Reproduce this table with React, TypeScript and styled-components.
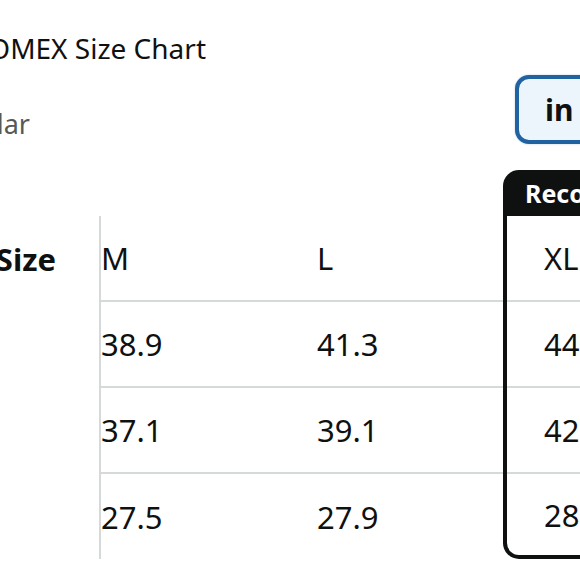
import React from "react";
import styled, { createGlobalStyle } from "styled-components";

const Global = createGlobalStyle`
  html, body { margin: 0; padding: 0; background: #ffffff; }
  body { font-family: "Noto Sans", "Open Sans", sans-serif; color: #0f1111; overflow: hidden; }
`;

const Page = styled.div`
  width: 580px;
  height: 580px;
  overflow: hidden;
  background: #ffffff;
  display: flex;
  flex-direction: column;
`;

const ClipRight = styled.div<{ $w: number }>`
  width: ${(p) => p.$w}px;
  display: flex;
  justify-content: flex-end;
  overflow: hidden;
  white-space: nowrap;
  flex-shrink: 0;
`;

const Title = styled.h1`
  margin: 0;
  font-size: 28px;
  font-weight: 400;
  line-height: 40px;
  color: #0f1111;
`;

const TitleRow = styled.div`
  margin-top: 28px;
  height: 40px;
  display: flex;
`;

const SubRow = styled.div`
  display: flex;
  justify-content: space-between;
  align-items: flex-start;
  margin-top: 7px;
`;

const Subtitle = styled.span`
  font-size: 27px;
  line-height: 36px;
  color: #565959;
  margin-top: 31px;
`;

const UnitToggle = styled.div`
  width: 120px;
  height: 69px;
  box-sizing: border-box;
  margin-right: -55px;
  border: 4px solid #2162a1;
  border-radius: 14px;
  background: #edf5fc;
  box-shadow: 0 0 2px rgba(33, 98, 161, 0.35);
  display: flex;
  align-items: center;
  padding-left: 26px;
  font-size: 30px;
  font-weight: 700;
  color: #0f1111;
`;

const Table = styled.div`
  margin-top: 26px;
  display: flex;
  align-items: flex-end;
`;

const LabelCol = styled.div`
  width: 99px;
  flex-shrink: 0;
  display: flex;
  flex-direction: column;
`;

const Col = styled.div<{ $w: number }>`
  width: ${(p) => p.$w}px;
  flex-shrink: 0;
  display: flex;
  flex-direction: column;
`;

const FirstCol = styled(Col)`
  border-left: 2px solid #d5d9d9;
`;

const Cell = styled.div<{ $h: number; $last?: boolean; $pad?: number }>`
  height: ${(p) => p.$h}px;
  box-sizing: border-box;
  display: flex;
  align-items: center;
  padding-left: ${(p) => p.$pad ?? 0}px;
  font-size: 31px;
  color: #0f1111;
  white-space: nowrap;
  border-bottom: ${(p) => (p.$last ? "none" : "2px solid #d5d9d9")};
`;

const LabelCell = styled(Cell)`
  border-bottom: none;
  font-weight: 700;
`;

const RecCol = styled.div`
  width: 200px;
  flex-shrink: 0;
  display: flex;
  flex-direction: column;
`;

const RecTab = styled.div`
  height: 46px;
  background: #0f1111;
  border-radius: 16px 16px 0 0;
  display: flex;
  align-items: center;
  padding-left: 22px;
  color: #ffffff;
  font-size: 25px;
  font-weight: 700;
  white-space: nowrap;
`;

const RecBody = styled.div`
  border: 4px solid #0f1111;
  border-top: none;
  border-radius: 0 0 16px 16px;
  display: flex;
  flex-direction: column;
`;

const rows = [
  { h: 86, vals: ["M", "L", "XL"] },
  { h: 86, vals: ["38.9", "41.3", "44.5"] },
  { h: 86, vals: ["37.1", "39.1", "42.1"] },
  { h: 85, vals: ["27.5", "27.9", "28.3"] },
];

export default function App() {
  return (
    <>
      <Global />
      <Page>
        <TitleRow>
          <ClipRight $w={206}>
            <Title>NOMEX Size Chart</Title>
          </ClipRight>
        </TitleRow>
        <SubRow>
          <ClipRight $w={30}>
            <Subtitle>Regular</Subtitle>
          </ClipRight>
          <UnitToggle>in</UnitToggle>
        </SubRow>
        <Table>
          <LabelCol>
            <ClipRight $w={56}>
              <LabelCell $h={86}>Size</LabelCell>
            </ClipRight>
            <Cell $h={86} $last />
            <Cell $h={86} $last />
            <Cell $h={85} $last />
          </LabelCol>
          <FirstCol $w={216}>
            {rows.map((r, i) => (
              <Cell key={i} $h={r.h} $last={i === rows.length - 1}>
                {r.vals[0]}
              </Cell>
            ))}
          </FirstCol>
          <Col $w={186}>
            {rows.map((r, i) => (
              <Cell key={i} $h={r.h} $last={i === rows.length - 1}>
                {r.vals[1]}
              </Cell>
            ))}
          </Col>
          <RecCol>
            <RecTab>Recommended</RecTab>
            <RecBody>
              {rows.map((r, i) => (
                <Cell key={i} $h={i === rows.length - 1 ? r.h - 4 : r.h} $pad={37} $last={i === rows.length - 1}>
                  {r.vals[2]}
                </Cell>
              ))}
            </RecBody>
          </RecCol>
        </Table>
      </Page>
    </>
  );
}
